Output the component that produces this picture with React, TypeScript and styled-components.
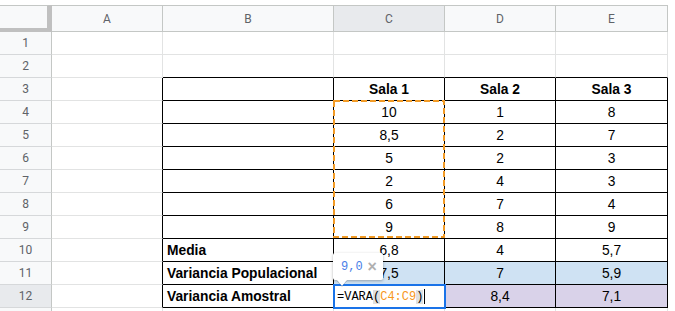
import React from "react";
import styled, { createGlobalStyle } from "styled-components";

const GlobalStyle = createGlobalStyle`
  html, body {
    margin: 0;
    padding: 0;
    background: #ffffff;
    overflow: hidden;
  }
`;

const COLS = ["A", "B", "C", "D", "E"];
const LIGHT = "#e2e3e3";
const HEAD_LINE = "#c4c7c5";
const BLACK = "#000000";

type CellValue = { text?: string; bold?: boolean; bg?: string; left?: boolean };

const blue = "#cfe2f3";
const purple = "#d9d2e9";

const data: Record<number, Record<string, CellValue>> = {
  3: {
    C: { text: "Sala 1", bold: true },
    D: { text: "Sala 2", bold: true },
    E: { text: "Sala 3", bold: true },
  },
  4: { C: { text: "10" }, D: { text: "1" }, E: { text: "8" } },
  5: { C: { text: "8,5" }, D: { text: "2" }, E: { text: "7" } },
  6: { C: { text: "5" }, D: { text: "2" }, E: { text: "3" } },
  7: { C: { text: "2" }, D: { text: "4" }, E: { text: "3" } },
  8: { C: { text: "6" }, D: { text: "7" }, E: { text: "4" } },
  9: { C: { text: "9" }, D: { text: "8" }, E: { text: "9" } },
  10: {
    B: { text: "Media", bold: true, left: true },
    C: { text: "6,8" },
    D: { text: "4" },
    E: { text: "5,7" },
  },
  11: {
    B: { text: "Variancia Populacional", bold: true, left: true },
    C: { text: "7,5", bg: blue },
    D: { text: "7", bg: blue },
    E: { text: "5,9", bg: blue },
  },
  12: {
    B: { text: "Variancia Amostral", bold: true, left: true },
    D: { text: "8,4", bg: purple },
    E: { text: "7,1", bg: purple },
  },
};

const inTable = (row: number, col: number) => row >= 3 && row <= 12 && col >= 1;

const App = () => {
  const rows = Array.from({ length: 13 }, (_, i) => i + 1);

  return (
    <>
      <GlobalStyle />
      <Frame>
        <Sheet>
          <Corner />
          {COLS.map((c) => (
            <ColHead key={c} $active={c === "C"}>
              {c}
            </ColHead>
          ))}
          {rows.map((r) => (
            <React.Fragment key={r}>
              {/* row 13 only peeks in at the bottom edge, its number is out of view */}
              <RowHead $active={r === 12}>{r <= 12 ? r : null}</RowHead>
              {COLS.map((c, ci) => {
                const v = data[r]?.[c] || {};
                const right =
                  inTable(r, ci) || (ci === 0 && r >= 3 && r <= 12) ? BLACK : LIGHT;
                const bottom = ci >= 1 && r >= 2 && r <= 12 ? BLACK : LIGHT;
                return (
                  <Cell
                    key={c}
                    $right={right}
                    $bottom={bottom}
                    $bg={v.bg}
                    $bold={v.bold}
                    $left={v.left}
                  >
                    {v.text}
                  </Cell>
                );
              })}
            </React.Fragment>
          ))}
        </Sheet>

        <CopyMarquee>
          <svg width="112" height="138" viewBox="0 0 112 138">
            <rect
              x="1"
              y="1"
              width="110"
              height="136"
              fill="none"
              stroke="#f29b26"
              strokeWidth="2"
              strokeDasharray="6 3"
            />
          </svg>
        </CopyMarquee>

        <Hint>
          <HintValue>9,0</HintValue>
          <HintClose>×</HintClose>
        </Hint>

        <Editor>
          <Formula>
            =VARA<Paren>(</Paren>
            <Ref>C4:C9</Ref>
            <Paren>)</Paren>
            <Caret />
          </Formula>
        </Editor>
      </Frame>
    </>
  );
};

export default App;

const Frame = styled.div`
  position: relative;
  padding-top: 5px;
  width: 675px;
  height: 311px;
  box-sizing: border-box;
  overflow: hidden;
`;

const Sheet = styled.div`
  display: grid;
  grid-template-columns: 52px 111px 171px 111px 111px 112px;
  grid-template-rows: 27px;
  grid-auto-rows: 23px;
  width: 668px;
`;

const Corner = styled.div`
  box-sizing: border-box;
  background: #f8f9fa;
  border-top: 1px solid ${HEAD_LINE};
  border-right: 5px solid #c0c0c0;
  border-bottom: 4px solid #c0c0c0;
`;

const ColHead = styled.div<{ $active?: boolean }>`
  box-sizing: border-box;
  display: flex;
  align-items: center;
  justify-content: center;
  background: ${(p) => (p.$active ? "#e8eaed" : "#f8f9fa")};
  border-top: 1px solid ${HEAD_LINE};
  border-right: 1px solid ${HEAD_LINE};
  border-bottom: 1px solid ${HEAD_LINE};
  color: #5f6368;
  font-family: Roboto, "Liberation Sans", sans-serif;
  font-size: 12px;
`;

const RowHead = styled.div<{ $active?: boolean }>`
  box-sizing: border-box;
  display: flex;
  align-items: center;
  justify-content: center;
  background: ${(p) => (p.$active ? "#e8eaed" : "#f8f9fa")};
  border-right: 1px solid ${HEAD_LINE};
  border-bottom: 1px solid #d6d8da;
  color: #5f6368;
  font-family: Roboto, "Liberation Sans", sans-serif;
  font-size: 12px;
`;

const Cell = styled.div<{
  $right: string;
  $bottom: string;
  $bg?: string;
  $bold?: boolean;
  $left?: boolean;
}>`
  box-sizing: border-box;
  display: flex;
  align-items: center;
  justify-content: ${(p) => (p.$left ? "flex-start" : "center")};
  padding: 1px 4px 0;
  background: ${(p) => p.$bg || "#ffffff"};
  border-right: 1px solid ${(p) => p.$right};
  border-bottom: 1px solid ${(p) => p.$bottom};
  font-family: "Liberation Sans", Arial, sans-serif;
  font-size: 13.8px;
  font-weight: ${(p) => (p.$bold ? 700 : 400)};
  color: #000000;
  white-space: nowrap;
  overflow: hidden;
`;

const CopyMarquee = styled.div`
  position: absolute;
  left: 333px;
  top: 100px;
  width: 112px;
  height: 138px;
  pointer-events: none;

  svg {
    display: block;
  }
`;

const Editor = styled.div`
  position: absolute;
  left: 333px;
  top: 284px;
  width: 113px;
  height: 25px;
  box-sizing: border-box;
  border: 2px solid #1a73e8;
  background: #ffffff;
  display: flex;
  align-items: center;
  padding-left: 2px;
`;

const Formula = styled.div`
  display: flex;
  align-items: center;
  font-family: "Liberation Mono", "DejaVu Sans Mono", monospace;
  font-size: 12px;
  color: #000000;
  white-space: pre;
`;

const Paren = styled.span`
  background: #e0e0e0;
`;

const Ref = styled.span`
  color: #f7981d;
`;

const Caret = styled.span`
  display: inline-block;
  width: 1px;
  height: 15px;
  margin-left: 1px;
  background: #000000;
`;

const Hint = styled.div`
  position: absolute;
  left: 333px;
  top: 253px;
  width: 50px;
  height: 27px;
  box-sizing: border-box;
  display: flex;
  align-items: center;
  gap: 5px;
  padding-left: 8px;
  background: #ffffff;
  border-radius: 2px;
  box-shadow: 0 1px 3px rgba(0, 0, 0, 0.3);
  z-index: 2;

  &::after {
    content: "";
    position: absolute;
    left: 4px;
    bottom: -6px;
    border-left: 5px solid transparent;
    border-right: 5px solid transparent;
    border-top: 6px solid #ffffff;
    filter: drop-shadow(0 1px 0 rgba(0, 0, 0, 0.2));
  }
`;

const HintValue = styled.span`
  font-family: "Liberation Mono", "DejaVu Sans Mono", monospace;
  font-size: 12px;
  color: #4a80e8;
`;

const HintClose = styled.span`
  font-family: "Liberation Sans", Arial, sans-serif;
  font-size: 16px;
  font-weight: 700;
  color: #b0b0b0;
  line-height: 1;
`;
